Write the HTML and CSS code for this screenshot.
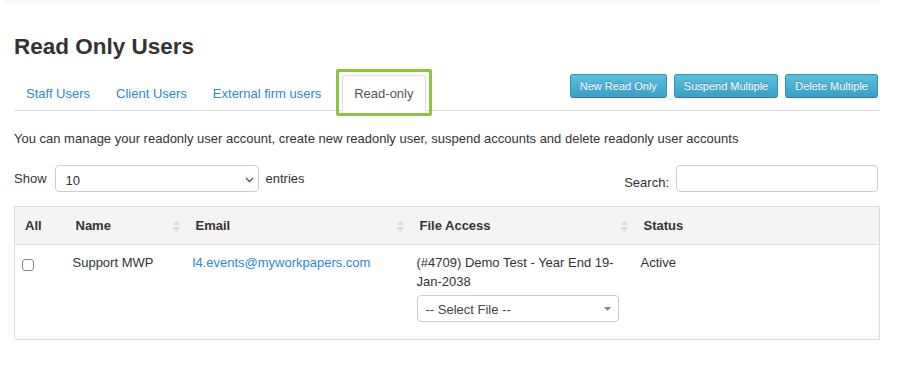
FILE: index.html
```html
<!DOCTYPE html>
<html lang="en">
<head>
    <meta charset="UTF-8">
    <meta name="viewport" content="width=device-width, initial-scale=1.0">
    <title>Read Only Users</title>
    <link rel="stylesheet" href="styles.css">
</head>
<body>
    <div class="topbar"></div>
    <div class="page">
        <h1 class="page-title">Read Only Users</h1>

        <div class="tab-bar">
            <ul class="tabs">
                <li><a href="#">Staff Users</a></li>
                <li><a href="#">Client Users</a></li>
                <li><a href="#">External firm users</a></li>
                <li class="active"><a href="#">Read-only</a></li>
            </ul>
            <div class="actions">
                <button class="btn-info">New Read Only</button>
                <button class="btn-info">Suspend Multiple</button>
                <button class="btn-info">Delete Multiple</button>
            </div>
        </div>

        <p class="intro">You can manage your readonly user account, create new readonly user, suspend accounts and delete readonly user accounts</p>

        <div class="table-controls">
            <div class="length">
                <span>Show</span>
                <div class="select-wrap length-select">
                    <select>
                        <option>10</option>
                        <option>25</option>
                        <option>50</option>
                    </select>
                    <svg class="chevron" width="9" height="6" viewBox="0 0 9 6"><path d="M1 1l3.5 3.5L8 1" fill="none" stroke="#555" stroke-width="1.3"/></svg>
                </div>
                <span>entries</span>
            </div>
            <div class="search">
                <span>Search:</span>
                <input type="text">
            </div>
        </div>

        <table class="users">
            <colgroup>
                <col style="width: 51px">
                <col style="width: 120px">
                <col style="width: 224px">
                <col style="width: 224px">
                <col>
            </colgroup>
            <thead>
                <tr>
                    <th>All</th>
                    <th class="sortable">Name<svg class="sort" width="7" height="12" viewBox="0 0 7 12"><path d="M0 5L3.5 0 7 5z M0 7l3.5 5L7 7z" fill="#dcdcdc"/></svg></th>
                    <th class="sortable">Email<svg class="sort" width="7" height="12" viewBox="0 0 7 12"><path d="M0 5L3.5 0 7 5z M0 7l3.5 5L7 7z" fill="#dcdcdc"/></svg></th>
                    <th class="sortable">File Access<svg class="sort" width="7" height="12" viewBox="0 0 7 12"><path d="M0 5L3.5 0 7 5z M0 7l3.5 5L7 7z" fill="#dcdcdc"/></svg></th>
                    <th>Status</th>
                </tr>
            </thead>
            <tbody>
                <tr>
                    <td><input type="checkbox" class="row-check"></td>
                    <td>Support MWP</td>
                    <td><a href="#">l4.events@myworkpapers.com</a></td>
                    <td>
                        (#4709) Demo Test - Year End 19-Jan-2038
                        <div class="select-wrap file-select">
                            <select>
                                <option>-- Select File --</option>
                            </select>
                            <svg class="caret" width="7" height="4" viewBox="0 0 7 4"><path d="M0 0h7L3.5 4z" fill="#888"/></svg>
                        </div>
                    </td>
                    <td>Active</td>
                </tr>
            </tbody>
        </table>
    </div>
</body>
</html>
```

FILE: styles.css
```css
body {
    margin: 0;
    font-family: "Liberation Sans", Arial, sans-serif;
    font-size: 13px;
    line-height: 19px;
    color: #333;
    background: #fff;
}
.topbar {
    height: 3px;
    margin: 0 23px 0 5px;
    background: #f6f6f6;
    box-shadow: 0 2px 6px rgba(0, 0, 0, 0.04);
}
.page {
    width: 866px;
    margin-left: 14px;
}
.page-title {
    margin: 32px 0 16px;
    font-size: 22.5px;
    line-height: 24px;
    font-weight: bold;
    color: #333;
}
.tab-bar {
    display: flex;
    justify-content: space-between;
    align-items: flex-start;
    border-bottom: 1px solid #ddd;
}
.tabs {
    display: flex;
    list-style: none;
    margin: 0 0 -1px;
    padding: 0;
}
.tabs li {
    margin-right: 2px;
    position: relative;
}
.tabs a {
    display: block;
    padding: 8px 11px 7px;
    border: 1px solid transparent;
    border-radius: 4px 4px 0 0;
    color: #2a8ad0;
    text-decoration: none;
}
.tabs .active {
    margin-left: 7px;
}
.tabs .active a {
    color: #555;
    background: #fff;
    border-color: #ddd #ddd transparent;
}
.tabs .active::after {
    content: "";
    position: absolute;
    top: -6px;
    left: -6px;
    right: -6px;
    bottom: -5px;
    border: 3px solid #8cc540;
    border-radius: 2px;
    pointer-events: none;
}
.actions {
    display: flex;
    gap: 7px;
    margin: -1px 2px 0 0;
}
.btn-info {
    height: 24px;
    padding: 0 9px;
    font-family: "Liberation Sans", Arial, sans-serif;
    font-size: 11px;
    color: #fff;
    text-shadow: 0 -1px 0 rgba(0, 0, 0, 0.25);
    background: linear-gradient(#5bc0de, #3a9fc6);
    border: 1px solid #3591b6;
    border-bottom-color: #2b7fa2;
    border-radius: 3px;
    cursor: pointer;
}
.intro {
    margin: 18px 0 0;
}
.table-controls {
    display: flex;
    justify-content: space-between;
    margin-top: 17px;
    height: 27px;
}
.length {
    display: flex;
    align-items: center;
    gap: 8px;
}
.length span:last-child {
    margin-left: -1px;
}
.select-wrap {
    position: relative;
}
.select-wrap select {
    display: block;
    width: 100%;
    height: 27px;
    -webkit-appearance: none;
    appearance: none;
    background: #fff;
    border: 1px solid #ccc;
    border-radius: 4px;
    font-family: "Liberation Sans", Arial, sans-serif;
    font-size: 13px;
    color: #333;
}
.length-select {
    width: 204px;
}
.length-select select {
    padding: 3px 10px 0;
}
.chevron {
    position: absolute;
    right: 5px;
    top: 12px;
    pointer-events: none;
}
.search {
    display: flex;
    align-items: flex-end;
    gap: 7px;
}
.search input {
    width: 202px;
    height: 27px;
    box-sizing: border-box;
    border: 1px solid #ccc;
    border-radius: 4px;
    margin-right: 2px;
}
.users {
    width: 100%;
    margin-top: 14px;
    border-collapse: collapse;
    table-layout: fixed;
    border: 1px solid #ddd;
}
.users th {
    position: relative;
    padding: 9px 10px;
    text-align: left;
    font-weight: bold;
    background: #f4f4f4;
    border-bottom: 1px solid #ddd;
}
.sort {
    position: absolute;
    right: 6px;
    top: 13px;
}
.users td {
    padding: 8px 7px;
    vertical-align: top;
}
.users a {
    color: #2a8ad0;
    text-decoration: none;
}
.row-check {
    -webkit-appearance: none;
    appearance: none;
    display: block;
    width: 12px;
    height: 12px;
    margin: 6px 0 0;
    border: 1px solid #888;
    border-radius: 3px;
    background: #fff;
}
.file-select {
    width: 202px;
    margin: 4px 0 9px;
}
.file-select select {
    padding: 2px 8px 0;
    color: #444;
}
.caret {
    position: absolute;
    right: 8px;
    top: 12px;
    pointer-events: none;
}
```
